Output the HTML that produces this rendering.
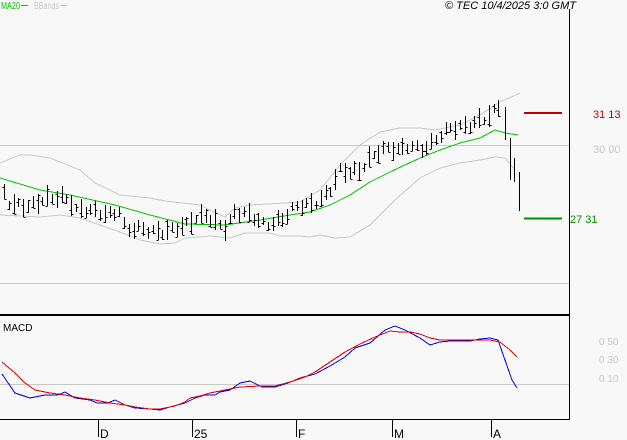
<!DOCTYPE html>
<html><head><meta charset="utf-8"><style>
html,body{margin:0;padding:0;background:#f8f8f8;}
svg{display:block;font-family:"Liberation Sans",sans-serif;}
</style></head><body>
<svg id="c" width="627" height="440" xmlns="http://www.w3.org/2000/svg" shape-rendering="crispEdges">
<rect width="627" height="440" fill="#f8f8f8"/>
<line x1="0" y1="145.5" x2="569" y2="145.5" stroke="#c8c8c8"/>
<line x1="0" y1="283.5" x2="569" y2="283.5" stroke="#c8c8c8"/>
<line x1="0" y1="384.5" x2="569" y2="384.5" stroke="#c8c8c8"/>
<line x1="0" y1="315" x2="569" y2="315" stroke="#000" stroke-width="2"/>
<line x1="0" y1="419.5" x2="569" y2="419.5" stroke="#000"/>
<line x1="569.5" y1="9" x2="569.5" y2="420" stroke="#000"/>
<g stroke="#000"><line x1="98.5" y1="419" x2="98.5" y2="437"/><line x1="192.5" y1="419" x2="192.5" y2="437"/><line x1="296.5" y1="419" x2="296.5" y2="437"/><line x1="392.5" y1="419" x2="392.5" y2="437"/><line x1="491.5" y1="419" x2="491.5" y2="437"/></g>
<g font-size="12" fill="#000"><text x="100" y="438">D</text><text x="194" y="438">25</text><text x="298" y="438">F</text><text x="394" y="438">M</text><text x="493" y="438">A</text></g>
<text x="1" y="9" font-size="10" fill="#00c000" textLength="19" lengthAdjust="spacingAndGlyphs">MA20</text><line x1="21" y1="5.5" x2="28" y2="5.5" stroke="#00c000"/>
<text x="34" y="9" font-size="10" fill="#c8c8c8" textLength="25" lengthAdjust="spacingAndGlyphs">BBands</text><line x1="60" y1="5.5" x2="67" y2="5.5" stroke="#c8c8c8"/>
<text x="576" y="9" font-size="11" font-style="italic" text-anchor="end" fill="#000">© TEC 10/4/2025 3:0 GMT</text>
<text x="3" y="331" font-size="10" fill="#000">MACD</text>
<line x1="524" y1="113" x2="562" y2="113" stroke="#c00000" stroke-width="2"/>
<line x1="524" y1="218.5" x2="562" y2="218.5" stroke="#009000" stroke-width="2"/>
<text x="593" y="118" font-size="11" fill="#c00000">31 13</text>
<text x="593" y="153" font-size="11" fill="#c8c8c8">30 00</text>
<text x="570" y="223" font-size="11" fill="#009000">27 31</text>
<g font-size="10" fill="#c8c8c8"><text x="599" y="345">0 50</text><text x="599" y="363">0 30</text><text x="599" y="382">0 10</text></g>
<polyline fill="none" stroke="#c8c8c8" points="0,163 20,155 30,155 50,158 80,170 95,183 120,195 150,198 165,201 200,205 210,210 225,217 235,208 250,205 285,203 300,202 320,190 340,165 360,145 380,132 400,128 420,128 435,130 460,125 480,115 500,102 520,93"/>
<polyline fill="none" stroke="#c8c8c8" points="0,215 40,217 60,215 80,218 120,232 140,240 160,244 175,243 185,238 200,237 210,236 220,237 230,238 245,233 270,233 280,236 300,236 310,237 320,235 335,238 350,237 370,225 380,215 395,200 420,178 440,168 460,163 480,160 495,157 505,158 515,170"/>
<polyline fill="none" stroke="#00c000" points="0,178 40,190 70,195 115,205 150,215 185,224 225,225 260,220 290,215 310,212 330,205 350,195 370,182 390,172 405,165 420,158 440,150 460,143 480,138 495,130 505,133 518,135"/>
<g id="bars" stroke="#000"></g>
<polyline fill="none" stroke="#0000e0" points="2,374 15,393 30,398 45,395 58,395 65,392 75,398 90,400 97,403 108,403 115,400 125,405 135,408 150,409 160,410 170,407 185,403 195,398 205,395 215,395 220,392 230,390 240,383 250,381 262,387 275,387 288,383 300,378 315,374 330,366 345,357 355,348 370,343 385,330 395,326 405,330 420,338 430,345 440,342 450,341 460,341 470,341 480,339 490,338 498,340 505,360 512,380 517,388"/>
<polyline fill="none" stroke="#e00000" points="2,362 15,373 25,383 35,390 50,393 65,395 80,398 95,400 110,403 125,405 135,407 150,409 160,409 175,406 185,402 190,398 200,396 210,393 225,390 240,387 260,386 275,386 290,382 305,377 315,372 330,362 345,352 360,344 375,337 390,331 400,332 410,332 420,334 430,338 440,340 460,340 490,340 500,342 510,350 517,357"/>
</svg>
<script>
var P=[[5,195],[10,205],[20,205],[30,207],[40,200],[50,198],[60,197],[70,200],[75,210],[90,210],[110,215],[120,210],[125,230],[140,228],[155,232],[165,232],[175,228],[185,225],[195,218],[205,215],[215,222],[225,228],[235,212],[245,213],[255,218],[265,225],[275,222],[285,218],[290,210],[300,205],[310,205],[320,200],[330,190],[340,170],[350,172],[360,170],[370,158],[380,150],[390,148],[400,150],[410,145],[420,150],[430,145],[440,135],[450,128],[460,127],[470,125],[480,120],[490,115],[500,105],[505,130],[510,160],[515,172],[520,200]];
function f(x){for(var i=0;i<P.length-1;i++){if(x<=P[i+1][0]){var t=(x-P[i][0])/(P[i+1][0]-P[i][0]);return P[i][1]+t*(P[i+1][1]-P[i][1]);}}return P[P.length-1][1];}
var g=document.getElementById('bars'),s='';
for(var x=4;x<=500;x+=4.8){var xi=Math.round(x)+0.5,y=f(x)+3*Math.sin(x*0.9);var h=8+14*Math.abs(Math.sin(x*1.7))*Math.abs(Math.sin(x*0.37));var o=y-h/2+h*Math.abs(Math.sin(x*3.1)),c=y-h/2+h*Math.abs(Math.cos(x*2.3));
s+='<line x1="'+xi+'" y1="'+Math.round(y-h/2)+'" x2="'+xi+'" y2="'+Math.round(y+h/2)+'"/><line x1="'+(xi-2)+'" y1="'+(Math.round(o)+.5)+'" x2="'+xi+'" y2="'+(Math.round(o)+.5)+'"/><line x1="'+xi+'" y1="'+(Math.round(c)+.5)+'" x2="'+(xi+2)+'" y2="'+(Math.round(c)+.5)+'"/>';}
s+='<line x1="505.5" y1="107" x2="505.5" y2="140"/><line x1="510.5" y1="138" x2="510.5" y2="180"/><line x1="514.5" y1="158" x2="514.5" y2="182"/><line x1="519.5" y1="172" x2="519.5" y2="211"/>';
g.innerHTML=s;
</script>
</body></html>
